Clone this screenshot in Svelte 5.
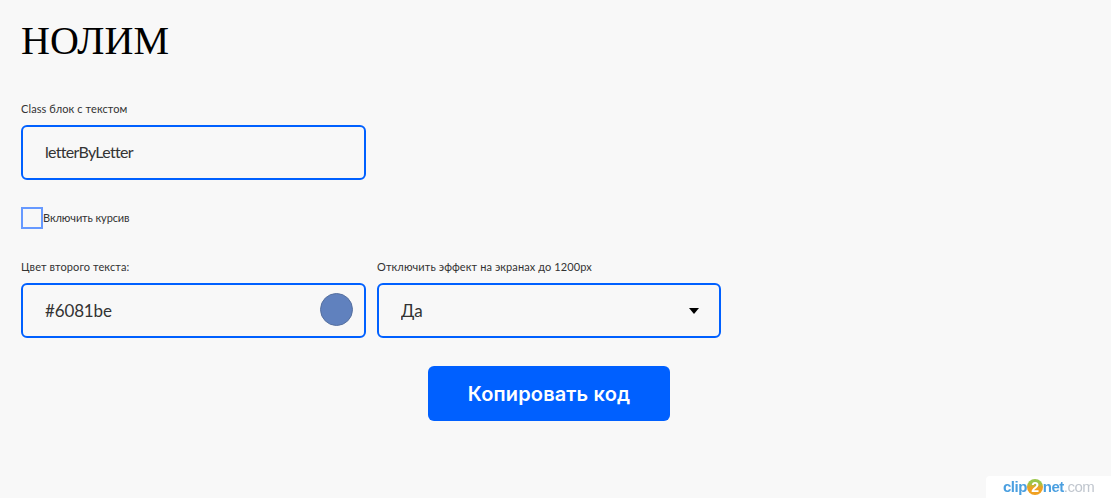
<script>
	let className = 'letterByLetter';
	let color = '#6081be';
	let disableEffect = 'Да';
	let italic = false;
</script>

<main class="page">
	<h1>НОЛИМ</h1>

	<div class="row first">
		<label class="field">
			<span class="caption">Class блок с текстом</span>
			<input class="control narrow" type="text" bind:value={className} />
		</label>
	</div>

	<label class="check">
		<input type="checkbox" bind:checked={italic} />
		<span class="caption">Включить курсив</span>
	</label>

	<div class="row">
		<label class="field">
			<span class="caption">Цвет второго текста:</span>
			<span class="color-wrap">
				<input class="control" type="text" bind:value={color} />
				<i class="swatch" style="background: {color}"></i>
			</span>
		</label>
		<label class="field second">
			<span class="caption">Отключить эффект на экранах до 1200px</span>
			<span class="select-wrap">
				<select class="control" bind:value={disableEffect}>
					<option>Да</option>
					<option>Нет</option>
				</select>
				<i class="arrow"></i>
			</span>
		</label>
	</div>

	<div class="actions">
		<button type="button">Копировать код</button>
	</div>
</main>

<div class="watermark"><span class="clip">clip</span><span class="two">2</span><span class="clip">net</span><span class="dotcom">.com</span></div>

<style>
	:global(body) {
		background: #f8f8f8;
	}

	.page {
		box-sizing: border-box;
		width: 1111px;
		height: 498px;
		padding: 18px 34px 0 21px;
		font-family: 'Lato', 'Liberation Sans', sans-serif;
		color: #000;
	}

	h1 {
		margin: 0;
		font-family: 'Liberation Serif', serif;
		font-size: 40px;
		font-weight: 400;
		line-height: 46px;
		letter-spacing: 0.2px;
		color: #000;
	}

	.row {
		display: flex;
		gap: 11px;
	}

	.row.first {
		margin-top: 38px;
	}

	.field {
		display: block;
		width: 345px;
	}

	.field.second {
		width: 344px;
	}

	.caption {
		display: block;
		font-size: 11px;
		line-height: 14px;
		letter-spacing: 0.1px;
		color: #333;
	}

	.field .caption {
		margin-bottom: 9px;
	}

	.control {
		display: block;
		box-sizing: border-box;
		width: 100%;
		height: 55px;
		padding: 0 22px;
		background: transparent;
		border: 2px solid #0060ff;
		border-radius: 6px;
		font-family: inherit;
		font-size: 17px;
		letter-spacing: -0.15px;
		color: #333;
		outline: none;
		appearance: none;
	}

	.control.narrow {
		font-size: 16px;
		letter-spacing: -0.7px;
		padding-bottom: 2px;
	}

	.color-wrap,
	.select-wrap {
		display: block;
		position: relative;
	}

	.swatch {
		position: absolute;
		top: 10px;
		right: 13px;
		box-sizing: border-box;
		width: 33px;
		height: 33px;
		border: 1px solid #56709f;
		border-radius: 50%;
	}

	.arrow {
		position: absolute;
		top: 25px;
		right: 22px;
		border-left: 5px solid transparent;
		border-right: 5px solid transparent;
		border-top: 6px solid #000;
	}

	.check {
		display: flex;
		align-items: center;
		margin: 27px 0 31px;
	}

	.check .caption {
		letter-spacing: -0.1px;
	}

	.check input {
		box-sizing: border-box;
		width: 22px;
		height: 22px;
		margin: 0;
		background: #f8f8f8;
		border: 2px solid #6699ff;
		appearance: none;
	}

	button {
		width: 242px;
		height: 55px;
		background: #0060ff;
		border: none;
		border-radius: 6px;
		font-family: 'Inter', sans-serif;
		font-size: 20px;
		font-weight: 600;
		letter-spacing: 0.15px;
		color: #fff;
	}

	.actions {
		display: flex;
		justify-content: center;
		margin-top: 28px;
	}

	.watermark {
		position: absolute;
		right: 0;
		bottom: 0;
		box-sizing: border-box;
		width: 125px;
		height: 22px;
		padding-left: 17px;
		background: #fff;
		border-top-left-radius: 4px;
		font-family: 'Liberation Sans', sans-serif;
		font-size: 15px;
		font-weight: 700;
		line-height: 22px;
		letter-spacing: -0.5px;
		white-space: nowrap;
		filter: blur(0.5px);
	}

	.clip {
		color: #4a9fe0;
	}

	.two {
		display: inline-block;
		width: 16px;
		height: 16px;
		border-radius: 50%;
		background: linear-gradient(#9ac64a 25%, #f0a020 55%);
		color: #fff;
		font-size: 14px;
		line-height: 16px;
		text-align: center;
	}

	.dotcom {
		color: #c0c6ce;
		font-weight: 400;
	}
</style>
